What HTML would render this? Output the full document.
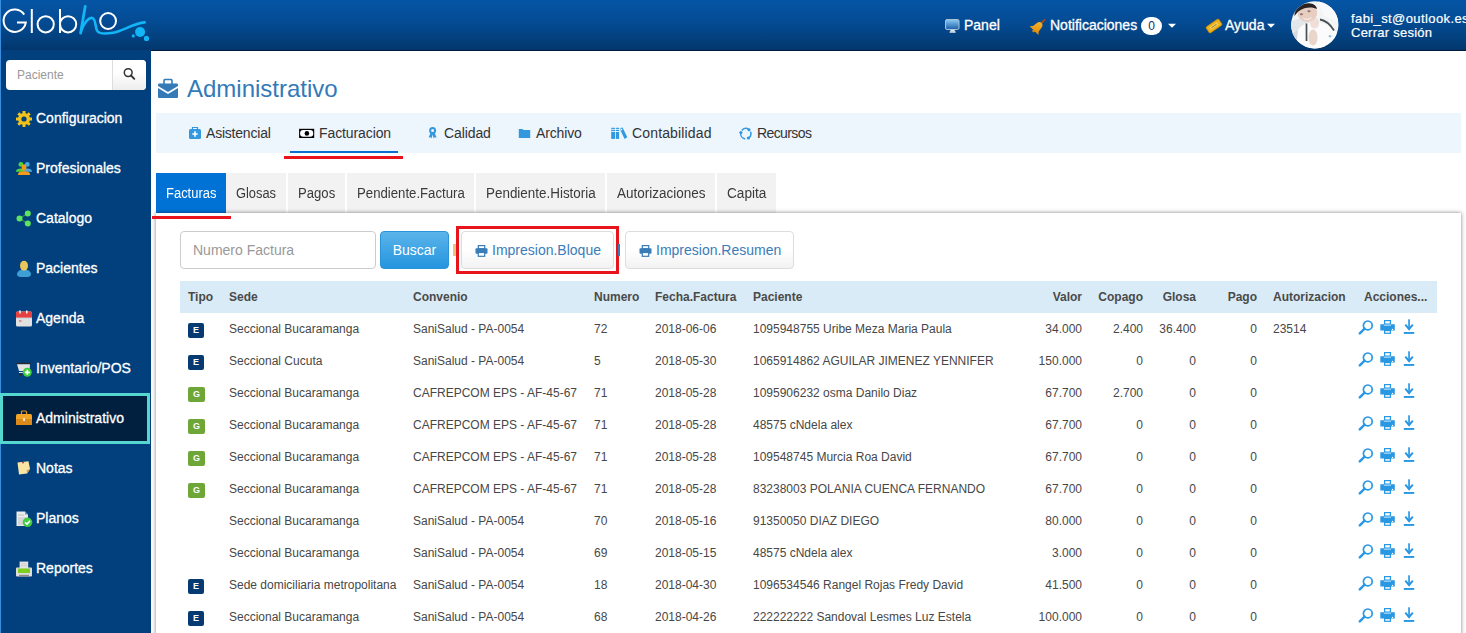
<!DOCTYPE html>
<html><head><meta charset="utf-8">
<style>
*{box-sizing:border-box;margin:0;padding:0}
html,body{width:1466px;height:633px;overflow:hidden;background:#fff;font-family:"Liberation Sans",sans-serif;position:relative}
.a{position:absolute;white-space:nowrap}
#hdr{left:0;top:0;width:1466px;height:50px;background:linear-gradient(#0555a5 0%,#044b93 45%,#033d78 85%,#03366c 100%)}
#hline{left:0;top:50px;width:1466px;height:1px;background:#011b3f}
#side{left:0;top:50px;width:151px;height:583px;background:#023f7d}
#lstrip{left:0;top:0;width:1px;height:633px;background:#3a8ee0}
.hi{color:#fff;font-size:14px;line-height:16px;top:17px;-webkit-text-stroke:0.3px #fff}
.mi{position:absolute;left:36px;color:#fff;font-size:14px;line-height:16px;white-space:nowrap;-webkit-text-stroke:0.3px #fff}
.sic{position:absolute;left:15px;width:18px;height:18px}
#srch{left:6px;top:60px;width:140px;height:30px;background:#fff;border-radius:4px;overflow:hidden}
#srchbtn{left:106px;top:0;width:34px;height:30px;border-left:1px solid #ddd;background:linear-gradient(#fff 40%,#ededed)}
#act{left:0;top:393px;width:150px;height:51px;background:#011f3f;border:3px solid #55d6cf}
#title{left:187px;top:75px;font-size:24px;line-height:28px;color:#337ab7}
#navbar{left:156px;top:113px;width:1305px;height:40px;background:#edf5fd}
.nv{font-size:14px;line-height:16px;top:125px;color:#333}
.tab{top:173px;height:40px;background:#f2f2f2;font-size:14px;line-height:16px;color:#3a3a3a;padding-top:12px;padding-left:10px}
#panel{left:156px;top:213px;width:1305px;height:430px;background:#fff}
#pshadow{left:156px;top:213px;width:1305px;height:430px;box-shadow:0 0 4px rgba(0,0,0,.5)}
.red{background:#e8141c}
#inp{left:180px;top:231px;width:196px;height:38px;border:1px solid #ccc;border-radius:4px;background:#fff}
#inp span{position:absolute;left:12px;top:10px;font-size:14px;line-height:16px;color:#999}
#buscar{left:380px;top:231px;width:69px;height:38px;border-radius:4px;background:linear-gradient(#5bb4ea,#2495de);border:1px solid #2a94d8;color:#fff;font-size:14px;line-height:16px;padding-top:10px;text-align:center}
.btn{top:231px;height:38px;border:1px solid #ddd;border-radius:4px;background:linear-gradient(#fff 50%,#f2f2f2);color:#3a7cb8;font-size:14px;line-height:16px;padding-top:10px}
#thead{left:180px;top:281px;width:1257px;height:32px;background:#d9ebf6}
.th{position:absolute;top:9px;font-size:12px;line-height:14px;font-weight:bold;color:#4a4a4a;white-space:nowrap}
.tr{position:absolute;left:0;width:1466px;height:32px}
.td{position:absolute;top:9px;font-size:12px;line-height:14px;color:#474747;white-space:nowrap}
.td.r{text-align:right}
.bdg{position:absolute;left:188px;top:10px;width:16px;height:15px;border-radius:2px;color:#fff;font-size:9px;font-weight:bold;line-height:15px;text-align:center}
.bE{background:#063a72}
.bG{background:#6ea637;width:17px}
.acts{position:absolute;left:1357px;top:6px}

.ts{display:inline-block;transform-origin:0 50%}

</style></head><body>
<svg width="0" height="0" style="position:absolute">
 <defs>
  <g id="acts">
   <circle cx="10.8" cy="6.4" r="4.4" fill="none" stroke="#2898e2" stroke-width="1.7"/>
   <path d="M7.6,9.6 L2.8,14.4" stroke="#2898e2" stroke-width="2.4" stroke-linecap="round"/>
   <rect x="27.6" y="1.6" width="5.8" height="3.5" fill="none" stroke="#2898e2" stroke-width="1.2"/>
   <path d="M23.3,5.2 H27 V6.6 H34 V5.2 H37.8 V11.6 H23.3Z" fill="#2898e2"/>
   <rect x="27.6" y="11.6" width="5.8" height="2.7" fill="#fff" stroke="#2898e2" stroke-width="1.2"/>
   <circle cx="35.5" cy="10.4" r="0.7" fill="#fff"/>
   <rect x="51.2" y="0.3" width="1.7" height="10" fill="#2898e2"/>
   <path d="M48.3,5.7 L52.05,10.2 L55.8,5.7" fill="none" stroke="#2898e2" stroke-width="2"/>
   <rect x="46.8" y="13" width="10.4" height="1.9" fill="#2898e2"/>
  </g>
 </defs>
</svg>
<div id="hdr" class="a"></div>
<div id="hline" class="a"></div>
<div id="side" class="a"></div>
<div id="lstrip" class="a"></div>

<!-- logo -->
<svg class="a" style="left:0;top:0" width="155" height="45" viewBox="0 0 155 45">
 <g fill="none" stroke="#fff" stroke-width="2">
  <path d="M24.2,14.6 A11.2,11.2 0 1 0 25.8,22.6 H17"/>
  <path d="M31.8,9 V33"/>
  <circle cx="45.7" cy="24.3" r="8.1"/>
  <path d="M60,9 V33"/>
  <circle cx="68.1" cy="24.3" r="8.1"/>
  <circle cx="108.1" cy="21" r="7.9"/>
 </g>
 <g fill="none" stroke="#12b5f6" stroke-linecap="round">
  <path d="M85.2,6.5 L80.6,33" stroke-width="2.8"/>
  <path d="M81.3,30.5 C84,23 88.5,17.2 92.3,18 C95.8,18.8 95,26 97,30.5 C99,34.5 106,34 113,32.8 C123,31 133,23.5 144.6,22.4" stroke-width="2.6"/>
 </g>
 <g fill="#12b5f6">
  <circle cx="140.1" cy="32" r="5"/>
  <circle cx="133.3" cy="35.9" r="1.6"/>
  <circle cx="146.5" cy="38.4" r="2.6"/>
 </g>
</svg>

<!-- header right -->
<svg class="a" style="left:944px;top:18px" width="17" height="16" viewBox="0 0 17 16">
 <defs><linearGradient id="mon" x1="0" y1="0" x2="0" y2="1"><stop offset="0" stop-color="#8ccbf4"/><stop offset="1" stop-color="#1c5dab"/></linearGradient></defs>
 <rect x="1.5" y="1.5" width="13.5" height="10" rx="1.5" fill="url(#mon)" stroke="#aac3d9" stroke-width="1"/>
 <rect x="6.4" y="11.8" width="4.4" height="1.8" fill="#dfe6ec"/>
 <rect x="5.6" y="13.4" width="6" height="1.3" fill="#f2f4f6"/>
</svg>
<div class="a hi" style="left:964px">Panel</div>

<svg class="a" style="left:1029px;top:17px" width="18" height="18" viewBox="0 0 18 18">
 <defs><linearGradient id="bellg" x1="0" y1="0" x2="1" y2="1"><stop offset="0" stop-color="#fbbd2e"/><stop offset="1" stop-color="#e08a08"/></linearGradient></defs>
 <g transform="translate(8.3 10.3) rotate(45)">
  <path d="M0,-5.5 V-10.5" stroke="#a9500f" stroke-width="1.7" stroke-linecap="round"/>
  <path d="M-2.6,-4.8 C-1,-6.6 1,-6.6 2.6,-4.8 C3.6,-3 3.4,0 4,2 L6.2,4.6 L-6.2,4.6 L-4,2 C-3.4,0 -3.6,-3 -2.6,-4.8Z" fill="url(#bellg)"/>
  <circle cx="0" cy="5.2" r="1.3" fill="#e08a08"/>
 </g>
</svg>
<div class="a hi" style="left:1050px">Notificaciones</div>
<div class="a" style="left:1141px;top:17px;width:21px;height:18px;border-radius:9px;background:#fff;color:#17315a;font-size:12px;line-height:18px;text-align:center">0</div>
<svg class="a" style="left:1168px;top:23px" width="8" height="6" viewBox="0 0 8 6"><path d="M0,0.8 H8 L4,4.8Z" fill="#fff"/></svg>

<svg class="a" style="left:1205px;top:18px" width="18" height="16" viewBox="0 0 18 16">
 <g transform="rotate(-35 9 8)">
  <rect x="1.5" y="4.5" width="15" height="7" rx="1" fill="#f0b81c" stroke="#d88f0c" stroke-width="1"/>
  <rect x="4.3" y="6.3" width="9.4" height="3.4" fill="#f7d862" stroke="#e8a818" stroke-width="0.6"/>
  <path d="M5.8,8 H12.2" stroke="#9a8040" stroke-width="1"/>
 </g>
</svg>
<div class="a hi" style="left:1225px">Ayuda</div>
<svg class="a" style="left:1267px;top:23px" width="8" height="6" viewBox="0 0 8 6"><path d="M0,0.8 H8 L4,4.8Z" fill="#fff"/></svg>

<svg class="a" style="left:1290px;top:0" width="50" height="50" viewBox="0 0 50 50">
 <defs>
  <clipPath id="cav"><circle cx="24.8" cy="24.85" r="23.7"/></clipPath>
  <filter id="bl" x="-10%" y="-10%" width="120%" height="120%"><feGaussianBlur stdDeviation="0.7"/></filter>
 </defs>
 <g clip-path="url(#cav)">
  <rect x="0" y="0" width="50" height="50" fill="#f3f4f5"/>
  <g filter="url(#bl)">
   <path d="M0,22 L22,14 L30,50 L0,50Z" fill="#e4e7ea"/>
   <path d="M2,34 L14,26 L16,50 L0,50Z" fill="#d5d9dd"/>
   <path d="M28,0 H50 V22 L34,16Z" fill="#f8f9fa"/>
   <path d="M8,30 C12,24 18,22 24,23 C30,22 38,24 46,32 L48,50 H6Z" fill="#fbfbfc"/>
   <ellipse cx="24.5" cy="23" rx="4.5" ry="5.5" fill="#efdfd8"/>
   <ellipse cx="17.5" cy="13.5" rx="9.8" ry="8.2" transform="rotate(-12 17.5 13.5)" fill="#e8cdc1"/>
   <path d="M4.5,16 C4,9 11,3 19,3.2 C23.5,3.4 26.5,5.5 27,9 C23,6.8 15,6.5 9,11 C7,12.5 6,14.5 4.5,16Z" fill="#2a2422"/>
   <path d="M13.5,18.5 C16,20 19.5,19.5 21.5,17.5" fill="none" stroke="#fff" stroke-width="1" opacity="0.8"/>
   <ellipse cx="11.5" cy="14.2" rx="1.6" ry="1" fill="#8a7370"/>
   <ellipse cx="19" cy="11.2" rx="1.6" ry="1" fill="#8a7370"/>
   <path d="M16.5,23.5 V41" stroke="#4a4f55" stroke-width="1.7"/>
   <path d="M30,19.5 C36,20.5 41,25.5 44,30.5" fill="none" stroke="#4a4f55" stroke-width="1.8"/>
   <ellipse cx="23" cy="37.5" rx="4.5" ry="8" fill="#ead5cb"/>
   <ellipse cx="40" cy="36.3" rx="1.5" ry="1" fill="#8db4df"/>
  </g>
 </g>
</svg>
<div class="a" style="left:1351px;top:11px;color:#fff;font-size:13px;line-height:15px;letter-spacing:0.4px;-webkit-text-stroke:0.2px #fff">fabi_st@outlook.es</div>
<div class="a" style="left:1351px;top:25px;color:#fff;font-size:13px;line-height:15px;letter-spacing:0.25px;-webkit-text-stroke:0.2px #fff">Cerrar sesión</div>

<!-- sidebar -->
<div id="srch" class="a">
 <span class="a" style="left:11px;top:8px;font-size:12px;line-height:14px;color:#999">Paciente</span>
 <div id="srchbtn" class="a">
  <svg class="a" style="left:10px;top:7px" width="14" height="14" viewBox="0 0 14 14">
   <circle cx="5.2" cy="5.6" r="3.9" fill="none" stroke="#333" stroke-width="1.5"/>
   <path d="M8,8.5 L11.3,11.8" stroke="#333" stroke-width="1.9" stroke-linecap="round"/>
  </svg>
 </div>
</div>
<div id="act" class="a"></div>

<!-- sidebar items -->
<svg class="sic" style="top:110px" viewBox="0 0 18 18">
 <g fill="#f1c21b">
  <circle cx="9" cy="9" r="6"/>
  <g stroke="#f1c21b" stroke-width="3">
   <path d="M9,1 V17 M1,9 H17 M3.3,3.3 L14.7,14.7 M14.7,3.3 L3.3,14.7"/>
  </g>
 </g>
 <circle cx="9" cy="9" r="2.6" fill="#033e7d"/>
</svg>
<div class="mi" style="top:110px">Configuracion</div>

<svg class="sic" style="top:160px" viewBox="0 0 18 18">
 <circle cx="5.9" cy="4.4" r="2.4" fill="#4cd43c"/>
 <path d="M0.8,11.8 C1,9.5 3,8.6 5.9,8.6 C8.5,8.6 9,9.5 9,11.8Z" fill="#4cd43c"/>
 <circle cx="12.3" cy="4.4" r="2.4" fill="#4aa8e0"/>
 <path d="M9,11.8 C9,9.5 10,8.6 12.3,8.6 C15,8.6 17,9.5 17.2,11.8Z" fill="#4aa8e0"/>
 <ellipse cx="9" cy="7.4" rx="2.4" ry="3.2" fill="#f39a1c"/>
 <path d="M3,15 C3,12 5,11.3 9,11.3 C13,11.3 15,12 15.1,15Z" fill="#f39a1c"/>
</svg>
<div class="mi" style="top:160px">Profesionales</div>

<svg class="sic" style="top:209px" viewBox="0 0 18 18">
 <path d="M4.5,9.5 L12.5,4.5 M4.5,9.5 L12.5,14.5" stroke="#3aa63a" stroke-width="1"/>
 <circle cx="4.5" cy="9.5" r="3" fill="#5de35d"/>
 <circle cx="12.8" cy="4.6" r="3" fill="#5de35d"/>
 <circle cx="12.8" cy="14.4" r="3" fill="#5de35d"/>
</svg>
<div class="mi" style="top:210px">Catalogo</div>

<svg class="sic" style="top:259px" viewBox="0 0 18 18">
 <path d="M2,15.5 C2,12 5,10.5 9,10.5 C13,10.5 16,12 16,15.5 C16,17.5 13,18.3 9,18.3 C5,18.3 2,17.5 2,15.5Z" fill="#3d9fd6"/>
 <ellipse cx="9" cy="6.8" rx="4" ry="5" fill="#eac559"/>
</svg>
<div class="mi" style="top:260px">Pacientes</div>

<svg class="sic" style="top:309px" viewBox="0 0 18 18">
 <rect x="1" y="2.6" width="16" height="15" rx="1.5" fill="#e2e2e2"/>
 <path d="M1,4.1 Q1,2.6 2.5,2.6 H15.5 Q17,2.6 17,4.1 V8.8 H1Z" fill="#e64040"/>
 <rect x="1" y="8.8" width="16" height="1" fill="#c5dbe3"/>
 <rect x="4.2" y="1.2" width="1.6" height="3.5" rx="0.8" fill="#f0f0f0"/>
 <rect x="11" y="1.2" width="1.6" height="3.5" rx="0.8" fill="#f0f0f0"/>
 <rect x="4" y="11.5" width="2.5" height="1" fill="#e64040"/>
</svg>
<div class="mi" style="top:310px">Agenda</div>

<svg class="sic" style="top:360px" viewBox="0 0 18 18">
 <path d="M1.5,3.5 H15.5" stroke="#2b2b2b" stroke-width="1.5"/>
 <path d="M2,4.2 H15 L14.5,11 H4Z" fill="#e4e4e4"/>
 <path d="M4,12.5 H9" stroke="#dcdcdc" stroke-width="1"/>
 <circle cx="5.5" cy="15" r="1.2" fill="#2b2b2b"/>
 <circle cx="12.3" cy="12.3" r="4.5" fill="#3ecf3e"/>
 <path d="M12.3,9.8 V14.8 M9.8,12.3 H14.8" stroke="#fff" stroke-width="1.7"/>
</svg>
<div class="mi" style="top:360px">Inventario/POS</div>

<svg class="sic" style="top:409px" viewBox="0 0 18 18">
 <path d="M6.5,5 V3 Q6.5,2 7.5,2 H10.5 Q11.5,2 11.5,3 V5" fill="none" stroke="#e3961e" stroke-width="1.2"/>
 <rect x="1" y="5" width="16" height="11" rx="1.5" fill="#f2a526"/>
 <rect x="1" y="10" width="16" height="6" rx="1" fill="#d98a1a"/>
 <rect x="8" y="9" width="2" height="3" fill="#f7e4c0"/>
</svg>
<div class="mi" style="top:410px">Administrativo</div>

<svg class="sic" style="top:459px" viewBox="0 0 18 18">
 <path d="M2.5,3.6 L13.5,2.2 L15,10 L12,14.5 L4,15.5Z" fill="#fae5a5"/>
 <path d="M15,10 L12,14.5 L11.5,11Z" fill="#d9a552"/>
 <circle cx="8" cy="3.6" r="0.9" fill="#c0282a"/>
</svg>
<div class="mi" style="top:460px">Notas</div>

<svg class="sic" style="top:510px" viewBox="0 0 18 18">
 <path d="M1.5,1.5 H10 L13,4.5 V16 H1.5Z" fill="#ececec"/>
 <path d="M10,1.5 L13,4.5 H10Z" fill="#4a9ed8"/>
 <path d="M3,5 H9 M3,8 H11 M3,10 H11 M3,12 H9 M3,14 H9" stroke="#bdbdbd" stroke-width="0.9"/>
 <circle cx="12.5" cy="12.3" r="4.8" fill="#44cc44"/>
 <path d="M10,12.3 L12,14.2 L15,10.8" fill="none" stroke="#fff" stroke-width="1.6"/>
</svg>
<div class="mi" style="top:510px">Planos</div>

<svg class="sic" style="top:560px" viewBox="0 0 18 18">
 <rect x="4.6" y="1.6" width="8.6" height="7.5" fill="#e8e8e8"/>
 <path d="M5.5,3.8 H12.3 M5.5,5.8 H12.3" stroke="#c4c4c4" stroke-width="0.8"/>
 <rect x="1" y="7.6" width="16" height="9" rx="1" fill="#dedede"/>
 <rect x="3" y="8.5" width="12" height="4.5" fill="#7ccf1c"/>
 <rect x="4" y="14.8" width="10" height="1.6" fill="#8a8a8a"/>
</svg>
<div class="mi" style="top:560px">Reportes</div>

<!-- content -->
<svg class="a" style="left:157px;top:78px" width="22" height="21" viewBox="0 0 22 21">
 <path d="M7,6 V2.5 Q7,1.5 8,1.5 H14 Q15,1.5 15,2.5 V6" fill="none" stroke="#337ab7" stroke-width="1.6"/>
 <path d="M1,6.5 Q1,5.5 2,5.5 H20 Q21,5.5 21,6.5 V8 L11,14 L1,8Z" fill="#337ab7"/>
 <path d="M1,10 L11,16 L21,10 V19 Q21,20 20,20 H2 Q1,20 1,19Z" fill="#337ab7"/>
</svg>
<div id="title" class="a">Administrativo</div>

<div id="navbar" class="a"></div>
<svg class="a" style="left:188px;top:126px" width="14" height="14" viewBox="0 0 14 14">
 <path d="M4.5,3 V1.5 H9.5 V3" fill="none" stroke="#3498de" stroke-width="1.2"/>
 <rect x="1" y="3" width="12" height="10" rx="1.5" fill="#3498de"/>
 <path d="M7,5.3 V10.7 M4.3,8 H9.7" stroke="#fff" stroke-width="1.6"/>
</svg>
<div class="a nv" style="left:206px;letter-spacing:-0.21px">Asistencial</div>
<svg class="a" style="left:298px;top:128px" width="17" height="11" viewBox="0 0 17 11">
 <rect x="1.1" y="0.8" width="15.1" height="9.2" fill="#000"/>
 <rect x="2.1" y="2" width="13.1" height="6.8" rx="3" ry="3" fill="#fff"/>
 <circle cx="8.9" cy="5.4" r="2.3" fill="#000"/>
</svg>
<div class="a nv" style="left:319px;letter-spacing:-0.1px">Facturacion</div>
<div class="a" style="left:290px;top:151px;width:108px;height:2px;background:#0b6fd1"></div>
<div class="a red" style="left:284px;top:156px;width:119px;height:3px"></div>

<svg class="a" style="left:428px;top:127px" width="10" height="12" viewBox="0 0 10 12">
 <circle cx="4.6" cy="3.6" r="2.5" fill="none" stroke="#3498de" stroke-width="2"/>
 <path d="M2.6,5.8 L0.6,10.6 L2.5,10.2 L3.5,11.6 L4.6,7.5 L5.7,11.6 L6.7,10.2 L8.6,10.6 L6.6,5.8Z" fill="#3498de"/>
</svg>
<div class="a nv" style="left:444px;letter-spacing:-0.1px">Calidad</div>
<svg class="a" style="left:518px;top:128px" width="13" height="11" viewBox="0 0 13 11">
 <path d="M0.8,1 H4.5 L5.5,2 H12.2 V10 H0.8Z" fill="#3498de"/>
</svg>
<div class="a nv" style="left:536px;letter-spacing:-0.13px">Archivo</div>
<svg class="a" style="left:610px;top:127px" width="18" height="13" viewBox="0 0 18 13">
 <rect x="1.2" y="0.8" width="3.8" height="11.1" fill="#3498de"/>
 <rect x="5.8" y="0.8" width="3.3" height="11.1" fill="#3498de"/>
 <path d="M1.2,2.4 H9.1 M1.2,4.5 H9.1" stroke="#fff" stroke-width="0.8"/>
 <path d="M9.8,2 L12.4,0.3 L17.3,10.3 L14.6,12Z" fill="#3498de"/>
 <circle cx="11.3" cy="2.6" r="0.9" fill="#fff"/>
</svg>
<div class="a nv" style="left:632px;letter-spacing:0.15px">Contabilidad</div>
<svg class="a" style="left:738px;top:127px" width="15" height="14" viewBox="0 0 15 14">
 <path d="M4.3,2.9 A5.2,5.2 0 0 1 11,2.6 M12.7,5.3 A5.2,5.2 0 0 1 10.4,11.2 M2.9,5.5 A5.2,5.2 0 0 0 6.6,11.7" fill="none" stroke="#3498de" stroke-width="1.5" stroke-linecap="round"/>
 <circle cx="11" cy="2.7" r="1.5" fill="#3498de"/>
 <circle cx="10.4" cy="11" r="1.6" fill="#3498de"/>
 <circle cx="2.9" cy="5.5" r="1.6" fill="#3498de"/>
</svg>
<div class="a nv" style="left:757px;letter-spacing:-0.6px">Recursos</div>

<div id="panel" class="a"></div>
<!-- tabs -->
<div class="a tab" style="left:156px;width:70px;background:#0072d6;color:#fff"><span class="ts" style="transform:scaleX(0.926)">Facturas</span></div>
<div class="a tab" style="left:226px;width:60px"><span class="ts" style="transform:scaleX(0.919)">Glosas</span></div>
<div class="a tab" style="left:288px;width:57px"><span class="ts" style="transform:scaleX(0.937)">Pagos</span></div>
<div class="a tab" style="left:347px;width:127px"><span class="ts" style="transform:scaleX(0.942)">Pendiente.Factura</span></div>
<div class="a tab" style="left:476px;width:129px"><span class="ts" style="transform:scaleX(0.959)">Pendiente.Historia</span></div>
<div class="a tab" style="left:607px;width:108px"><span class="ts" style="transform:scaleX(0.965)">Autorizaciones</span></div>
<div class="a tab" style="left:717px;width:59px"><span class="ts" style="transform:scaleX(0.974)">Capita</span></div>
<div id="pshadow" class="a"></div>
<div class="a red" style="left:152px;top:216px;width:79px;height:3px"></div>

<div id="inp" class="a"><span>Numero Factura</span></div>
<div id="buscar" class="a">Buscar</div>
<div class="a" style="left:453px;top:244px;width:3px;height:12px;background:#e9c48a"></div>
<div class="a btn" style="left:461px;width:153px">
 <svg class="a" style="left:13px;top:13px" width="13" height="12" viewBox="0 0 13 12"><rect x="3.3" y="0.6" width="6.4" height="3.2" fill="none" stroke="#3a7cb8" stroke-width="1.2"/><rect x="0.5" y="3.3" width="12" height="5.5" rx="1" fill="#3a7cb8"/><rect x="3.3" y="7.5" width="6.4" height="3.8" fill="#fff" stroke="#3a7cb8" stroke-width="1.2"/></svg>
 <span class="a" style="left:30px;top:10px">Impresion.Bloque</span>
</div>
<div class="a" style="left:456px;top:226px;width:163px;height:48px;border:3px solid #e8141c"></div>
<div class="a" style="left:618px;top:244px;width:2px;height:12px;background:#3a7cb8"></div>
<div class="a btn" style="left:625px;width:169px">
 <svg class="a" style="left:13px;top:13px" width="13" height="12" viewBox="0 0 13 12"><rect x="3.3" y="0.6" width="6.4" height="3.2" fill="none" stroke="#3a7cb8" stroke-width="1.2"/><rect x="0.5" y="3.3" width="12" height="5.5" rx="1" fill="#3a7cb8"/><rect x="3.3" y="7.5" width="6.4" height="3.8" fill="#fff" stroke="#3a7cb8" stroke-width="1.2"/></svg>
 <span class="a" style="left:30px;top:10px">Impresion.Resumen</span>
</div>

<div id="thead" class="a">
 <span class="th" style="left:8px">Tipo</span>
 <span class="th" style="left:49px">Sede</span>
 <span class="th" style="left:233px">Convenio</span>
 <span class="th" style="left:414px">Numero</span>
 <span class="th" style="left:475px">Fecha.Factura</span>
 <span class="th" style="left:573px">Paciente</span>
 <span class="th" style="right:355px">Valor</span>
 <span class="th" style="right:294px">Copago</span>
 <span class="th" style="right:241px">Glosa</span>
 <span class="th" style="right:180px">Pago</span>
 <span class="th" style="left:1093px">Autorizacion</span>
 <span class="th" style="left:1184px">Acciones...</span>
</div>
<div class="tr" style="top:313px">
<span class="bdg bE">E</span>
<span class="td" style="left:229px">Seccional Bucaramanga</span>
<span class="td" style="left:413px">SaniSalud - PA-0054</span>
<span class="td" style="left:594px">72</span>
<span class="td" style="left:655px">2018-06-06</span>
<span class="td" style="left:753px">1095948755 Uribe Meza Maria Paula</span>
<span class="td r" style="right:384px">34.000</span>
<span class="td r" style="right:323px">2.400</span>
<span class="td r" style="right:270px">36.400</span>
<span class="td r" style="right:209px">0</span>
<span class="td" style="left:1273px">23514</span>
<svg class="acts" width="60" height="16" viewBox="0 0 60 16"><use href="#acts"/></svg>
</div>
<div class="tr" style="top:345px">
<span class="bdg bE">E</span>
<span class="td" style="left:229px">Seccional Cucuta</span>
<span class="td" style="left:413px">SaniSalud - PA-0054</span>
<span class="td" style="left:594px">5</span>
<span class="td" style="left:655px">2018-05-30</span>
<span class="td" style="left:753px">1065914862 AGUILAR JIMENEZ YENNIFER</span>
<span class="td r" style="right:384px">150.000</span>
<span class="td r" style="right:323px">0</span>
<span class="td r" style="right:270px">0</span>
<span class="td r" style="right:209px">0</span>
<svg class="acts" width="60" height="16" viewBox="0 0 60 16"><use href="#acts"/></svg>
</div>
<div class="tr" style="top:377px">
<span class="bdg bG">G</span>
<span class="td" style="left:229px">Seccional Bucaramanga</span>
<span class="td" style="left:413px">CAFREPCOM EPS - AF-45-67</span>
<span class="td" style="left:594px">71</span>
<span class="td" style="left:655px">2018-05-28</span>
<span class="td" style="left:753px">1095906232 osma Danilo Diaz</span>
<span class="td r" style="right:384px">67.700</span>
<span class="td r" style="right:323px">2.700</span>
<span class="td r" style="right:270px">0</span>
<span class="td r" style="right:209px">0</span>
<svg class="acts" width="60" height="16" viewBox="0 0 60 16"><use href="#acts"/></svg>
</div>
<div class="tr" style="top:409px">
<span class="bdg bG">G</span>
<span class="td" style="left:229px">Seccional Bucaramanga</span>
<span class="td" style="left:413px">CAFREPCOM EPS - AF-45-67</span>
<span class="td" style="left:594px">71</span>
<span class="td" style="left:655px">2018-05-28</span>
<span class="td" style="left:753px">48575 cNdela alex</span>
<span class="td r" style="right:384px">67.700</span>
<span class="td r" style="right:323px">0</span>
<span class="td r" style="right:270px">0</span>
<span class="td r" style="right:209px">0</span>
<svg class="acts" width="60" height="16" viewBox="0 0 60 16"><use href="#acts"/></svg>
</div>
<div class="tr" style="top:441px">
<span class="bdg bG">G</span>
<span class="td" style="left:229px">Seccional Bucaramanga</span>
<span class="td" style="left:413px">CAFREPCOM EPS - AF-45-67</span>
<span class="td" style="left:594px">71</span>
<span class="td" style="left:655px">2018-05-28</span>
<span class="td" style="left:753px">109548745 Murcia Roa David</span>
<span class="td r" style="right:384px">67.700</span>
<span class="td r" style="right:323px">0</span>
<span class="td r" style="right:270px">0</span>
<span class="td r" style="right:209px">0</span>
<svg class="acts" width="60" height="16" viewBox="0 0 60 16"><use href="#acts"/></svg>
</div>
<div class="tr" style="top:473px">
<span class="bdg bG">G</span>
<span class="td" style="left:229px">Seccional Bucaramanga</span>
<span class="td" style="left:413px">CAFREPCOM EPS - AF-45-67</span>
<span class="td" style="left:594px">71</span>
<span class="td" style="left:655px">2018-05-28</span>
<span class="td" style="left:753px">83238003 POLANIA CUENCA FERNANDO</span>
<span class="td r" style="right:384px">67.700</span>
<span class="td r" style="right:323px">0</span>
<span class="td r" style="right:270px">0</span>
<span class="td r" style="right:209px">0</span>
<svg class="acts" width="60" height="16" viewBox="0 0 60 16"><use href="#acts"/></svg>
</div>
<div class="tr" style="top:505px">
<span class="td" style="left:229px">Seccional Bucaramanga</span>
<span class="td" style="left:413px">SaniSalud - PA-0054</span>
<span class="td" style="left:594px">70</span>
<span class="td" style="left:655px">2018-05-16</span>
<span class="td" style="left:753px">91350050 DIAZ DIEGO</span>
<span class="td r" style="right:384px">80.000</span>
<span class="td r" style="right:323px">0</span>
<span class="td r" style="right:270px">0</span>
<span class="td r" style="right:209px">0</span>
<svg class="acts" width="60" height="16" viewBox="0 0 60 16"><use href="#acts"/></svg>
</div>
<div class="tr" style="top:537px">
<span class="td" style="left:229px">Seccional Bucaramanga</span>
<span class="td" style="left:413px">SaniSalud - PA-0054</span>
<span class="td" style="left:594px">69</span>
<span class="td" style="left:655px">2018-05-15</span>
<span class="td" style="left:753px">48575 cNdela alex</span>
<span class="td r" style="right:384px">3.000</span>
<span class="td r" style="right:323px">0</span>
<span class="td r" style="right:270px">0</span>
<span class="td r" style="right:209px">0</span>
<svg class="acts" width="60" height="16" viewBox="0 0 60 16"><use href="#acts"/></svg>
</div>
<div class="tr" style="top:569px">
<span class="bdg bE">E</span>
<span class="td" style="left:229px">Sede domiciliaria metropolitana</span>
<span class="td" style="left:413px">SaniSalud - PA-0054</span>
<span class="td" style="left:594px">18</span>
<span class="td" style="left:655px">2018-04-30</span>
<span class="td" style="left:753px">1096534546 Rangel Rojas Fredy David</span>
<span class="td r" style="right:384px">41.500</span>
<span class="td r" style="right:323px">0</span>
<span class="td r" style="right:270px">0</span>
<span class="td r" style="right:209px">0</span>
<svg class="acts" width="60" height="16" viewBox="0 0 60 16"><use href="#acts"/></svg>
</div>
<div class="tr" style="top:601px">
<span class="bdg bE">E</span>
<span class="td" style="left:229px">Seccional Bucaramanga</span>
<span class="td" style="left:413px">SaniSalud - PA-0054</span>
<span class="td" style="left:594px">68</span>
<span class="td" style="left:655px">2018-04-26</span>
<span class="td" style="left:753px">222222222 Sandoval Lesmes Luz Estela</span>
<span class="td r" style="right:384px">100.000</span>
<span class="td r" style="right:323px">0</span>
<span class="td r" style="right:270px">0</span>
<span class="td r" style="right:209px">0</span>
<svg class="acts" width="60" height="16" viewBox="0 0 60 16"><use href="#acts"/></svg>
</div>

</body></html>
